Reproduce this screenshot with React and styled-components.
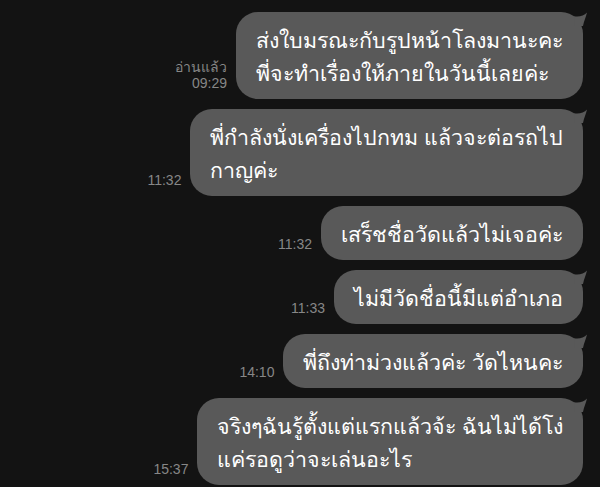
import React from "react";
import styled, { createGlobalStyle } from "styled-components";

const GlobalStyle = createGlobalStyle`
  html, body {
    margin: 0;
    padding: 0;
    background: #131313;
  }
  body {
    font-family: "Noto Sans", "DejaVu Sans", sans-serif;
  }
`;

const Chat = styled.div`
  display: flex;
  flex-direction: column;
  gap: 10px;
  padding: 12px 17px 0 0;
  width: 600px;
  height: 487px;
  box-sizing: border-box;
  overflow: hidden;
`;

const Row = styled.div`
  display: flex;
  justify-content: flex-end;
  align-items: flex-end;
  gap: 9px;
`;

const Meta = styled.div`
  font-family: "Liberation Sans", "Noto Sans", sans-serif;
  font-size: 14px;
  line-height: 16px;
  color: #878787;
  text-align: right;
  margin-bottom: 8px;
  white-space: nowrap;
`;

const Bubble = styled.div`
  position: relative;
  background: #595959;
  color: #ffffff;
  border-radius: 22px;
  padding: 11px 20px 10px;
  font-size: 21.4px;
  line-height: 33px;
  white-space: nowrap;
`;

const Tail = styled.svg`
  position: absolute;
  top: 0;
  right: -5px;
  width: 16px;
  height: 18px;
  overflow: visible;
`;

const TailMark = () => (
  <Tail viewBox="-11 0 16 18">
    <path d="M-9 4.3 C-4 5.2 1 4 4 0.6 C3 5 1 9 0 14 L-8 14 Z" fill="#595959" />
  </Tail>
);

const messages = [
  {
    meta: ["อ่านแล้ว", "09:29"],
    lines: ["ส่งใบมรณะกับรูปหน้าโลงมานะคะ", "พี่จะทำเรื่องให้ภายในวันนี้เลยค่ะ"],
    tail: true,
  },
  {
    meta: ["11:32"],
    lines: ["พี่กำลังนั่งเครื่องไปกทม แล้วจะต่อรถไป", "กาญค่ะ"],
    tail: true,
  },
  { meta: ["11:32"], lines: ["เสร็ชชื่อวัดแล้วไม่เจอค่ะ"], tail: false },
  { meta: ["11:33"], lines: ["ไม่มีวัดชื่อนี้มีแต่อำเภอ"], tail: true },
  { meta: ["14:10"], lines: ["พี่ถึงท่าม่วงแล้วค่ะ วัดไหนคะ"], tail: true },
  {
    meta: ["15:37"],
    lines: ["จริงๆฉันรู้ตั้งแต่แรกแล้วจ้ะ ฉันไม่ได้โง่", "แค่รอดูว่าจะเล่นอะไร"],
    tail: true,
  },
];

export default function App() {
  return (
    <>
      <GlobalStyle />
      <Chat>
        {messages.map((m, i) => (
          <Row key={i}>
            <Meta>
              {m.meta.map((t, j) => (
                <div key={j}>{t}</div>
              ))}
            </Meta>
            <Bubble>
              {m.lines.map((l, j) => (
                <div key={j}>{l}</div>
              ))}
              {m.tail && <TailMark />}
            </Bubble>
          </Row>
        ))}
      </Chat>
    </>
  );
}
